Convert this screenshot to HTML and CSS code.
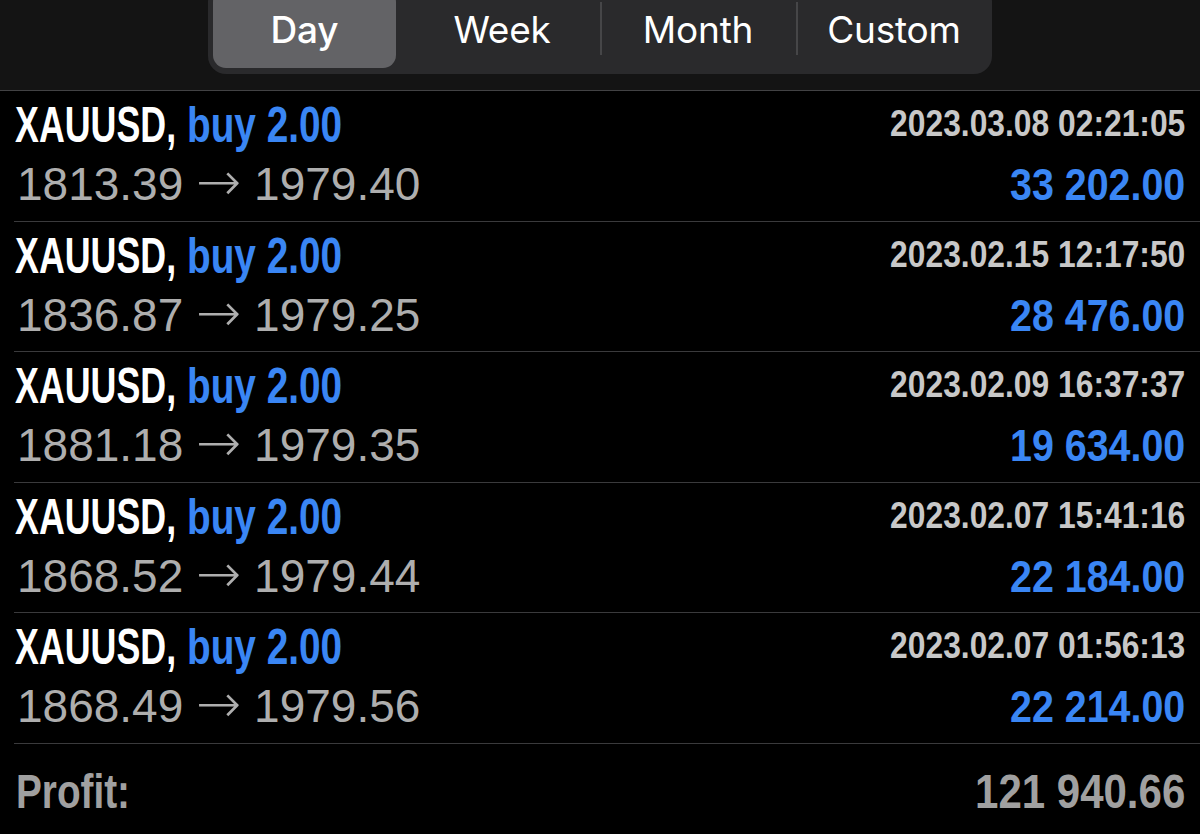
FILE: index.html
```html
<!DOCTYPE html>
<html>
<head>
<meta charset="utf-8">
<link rel="stylesheet" href="styles.css">
</head>
<body>
<header class="topbar">
  <div class="segmented">
    <div class="seg seg-active">Day</div>
    <div class="seg">Week</div>
    <div class="seg seg-sep">Month</div>
    <div class="seg seg-sep">Custom</div>
  </div>
</header>
<main class="list">
  <div class="row">
    <div class="line1"><span class="title"><span class="sym">XAUUSD,</span><span class="buy">buy 2.00</span></span><span class="date">2023.03.08 02:21:05</span></div>
    <div class="line2"><span class="prices">1813.39 <span class="arrow">→</span> 1979.40</span><span class="profit">33 202.00</span></div>
  </div>
  <div class="row">
    <div class="line1"><span class="title"><span class="sym">XAUUSD,</span><span class="buy">buy 2.00</span></span><span class="date">2023.02.15 12:17:50</span></div>
    <div class="line2"><span class="prices">1836.87 <span class="arrow">→</span> 1979.25</span><span class="profit">28 476.00</span></div>
  </div>
  <div class="row">
    <div class="line1"><span class="title"><span class="sym">XAUUSD,</span><span class="buy">buy 2.00</span></span><span class="date">2023.02.09 16:37:37</span></div>
    <div class="line2"><span class="prices">1881.18 <span class="arrow">→</span> 1979.35</span><span class="profit">19 634.00</span></div>
  </div>
  <div class="row">
    <div class="line1"><span class="title"><span class="sym">XAUUSD,</span><span class="buy">buy 2.00</span></span><span class="date">2023.02.07 15:41:16</span></div>
    <div class="line2"><span class="prices">1868.52 <span class="arrow">→</span> 1979.44</span><span class="profit">22 184.00</span></div>
  </div>
  <div class="row">
    <div class="line1"><span class="title"><span class="sym">XAUUSD,</span><span class="buy">buy 2.00</span></span><span class="date">2023.02.07 01:56:13</span></div>
    <div class="line2"><span class="prices">1868.49 <span class="arrow">→</span> 1979.56</span><span class="profit">22 214.00</span></div>
  </div>
  <div class="total">
    <span class="total-label">Profit:</span><span class="total-value">121 940.66</span>
  </div>
</main>
</body>
</html>
```
FILE: styles.css
```css
html, body {
  margin: 0;
  padding: 0;
  background: #000;
  width: 1200px;
  height: 834px;
  overflow: hidden;
}
body {
  font-family: "Liberation Sans", Arial, sans-serif;
}
.topbar {
  height: 90px;
  background: #141414;
  border-bottom: 1.5px solid #424244;
  overflow: hidden;
}
.segmented {
  margin: -16px 0 0 208px;
  width: 784px;
  height: 90px;
  background: #2a2a2c;
  border-radius: 18px;
  display: grid;
  grid-template-columns: repeat(4, 196px);
  font-family: Inter, "Open Sans", sans-serif;
  font-size: 37px;
  color: #fff;
}
.seg {
  position: relative;
  display: flex;
  align-items: center;
  justify-content: center;
  padding-top: 20px;
  padding-bottom: 20px;
  letter-spacing: -0.2px;
}
.seg-active {
  margin: 5px 8px 6px 5px;
  padding-top: 15px;
  padding-bottom: 14px;
  background: #636366;
  border-radius: 13px;
  font-weight: 500;
}
.seg-sep::before {
  content: "";
  position: absolute;
  left: 0;
  top: 18px;
  height: 53px;
  width: 2px;
  background: #464648;
}
.list {
  padding-left: 14px;
}
.row {
  border-bottom: 1px solid #3a3a3c;
  padding-right: 15px;
  box-sizing: border-box;
  height: 130.5px;
  display: flex;
  flex-direction: column;
}
.line1, .line2 {
  display: flex;
  justify-content: space-between;
}
.line1 {
  align-items: flex-start;
  height: 48px;
  margin-top: 10px;
}
.line2 {
  align-items: baseline;
  height: 46px;
  line-height: 46px;
  margin-top: 12px;
}
.title {
  display: flex;
  gap: 11px;
  font-weight: 700;
  font-size: 50px;
  line-height: 48px;
  color: #fff;
  margin-left: 1px;
  white-space: nowrap;
}
.sym {
  display: inline-block;
  transform: scaleX(0.716);
  transform-origin: 0 50%;
  margin-right: -64px;
}
.buy {
  display: inline-block;
  color: #3a86f4;
  transform: scaleX(0.775);
  transform-origin: 0 50%;
  margin-right: -45px;
}
.date {
  display: inline-block;
  font-weight: 700;
  font-size: 36px;
  line-height: 36px;
  margin-top: 5px;
  color: #c8c8c8;
  transform: scaleX(0.883);
  transform-origin: 100% 50%;
  white-space: nowrap;
}
.prices {
  font-size: 46px;
  color: #aeaeae;
  padding-left: 3px;
  white-space: nowrap;
}
.arrow {
  font-family: "DejaVu Sans", sans-serif;
  font-weight: 200;
  font-size: 54px;
  line-height: 0;
}
.profit {
  display: inline-block;
  font-weight: 700;
  font-size: 45px;
  color: #3a86f4;
  transform: scaleX(0.875);
  transform-origin: 100% 50%;
  white-space: nowrap;
}
.total {
  display: flex;
  justify-content: space-between;
  align-items: baseline;
  padding-right: 15px;
  margin-top: 23px;
  line-height: 48px;
  font-weight: 700;
  font-size: 49px;
  color: #a0a0a0;
}
.total-label {
  display: inline-block;
  margin-left: 2px;
  transform: scaleX(0.79);
  transform-origin: 0 50%;
}
.total-value {
  display: inline-block;
  transform: scaleX(0.857);
  transform-origin: 100% 50%;
}
```
